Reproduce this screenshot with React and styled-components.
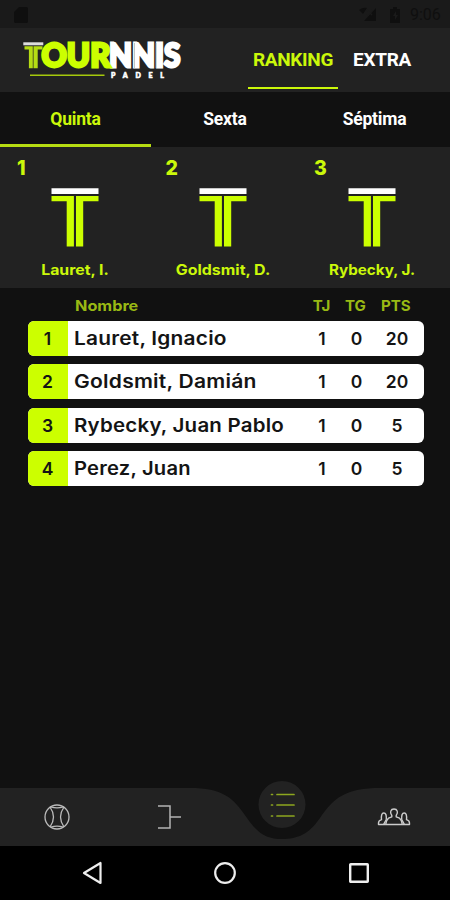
import React, { useState } from 'react';
import styled, { createGlobalStyle } from 'styled-components';

const GlobalStyle = createGlobalStyle`
  * { box-sizing: border-box; }
  body {
    margin: 0;
    background: #111;
    font-family: Inter, "Open Sans", sans-serif;
  }
  svg { display: block; }
`

const Screen = styled.div`
  width: 450px;
  height: 900px;
  display: flex;
  flex-direction: column;
  overflow: hidden;
  background: #111;
`

const StatusBar = styled.div`
  height: 28px;
  flex: none;
  display: flex;
  align-items: center;
  justify-content: space-between;
  padding: 1px 9px 0 14px;
  background: #1a1a1a;
  color: #0f0f0f;
`

const StatusRight = styled.div`
  display: flex;
  align-items: center;
`

const Clock = styled.span`
  width: 31px;
  margin-left: 9px;
  font: 400 16px/20px Roboto, sans-serif;
  white-space: nowrap;
`

const Header = styled.header`
  height: 64px;
  flex: none;
  display: flex;
  justify-content: space-between;
  padding: 0 24px 0 20px;
  background: #222;
`

const Menu = styled.nav`
  display: flex;
  padding-bottom: 3px;
`

const MenuItem = styled.button`
  display: flex;
  align-items: center;
  justify-content: center;
  width: ${p => p.$width}px;
  padding: 3px 0 0;
  border: 0;
  border-bottom: 2.5px solid ${p => p.$active ? '#cbf80a' : 'transparent'};
  background: none;
  color: ${p => p.$active ? '#cbf80a' : '#fff'};
  font: 700 19px Roboto, sans-serif;
  letter-spacing: -0.3px;
`

const Tabs = styled.div`
  height: 55px;
  flex: none;
  display: grid;
  grid-template-columns: 151px 148px 151px;
  background: #111;
`

const Tab = styled.button`
  padding: 2px 0 0;
  border: 0;
  border-bottom: 3px solid ${p => p.$active ? '#b6dc12' : 'transparent'};
  background: none;
  color: ${p => p.$active ? '#cbf80a' : '#fff'};
  font: 700 17.5px Roboto, sans-serif;
  letter-spacing: -0.2px;
`

const Podium = styled.section`
  height: 141px;
  flex: none;
  display: grid;
  grid-template-columns: repeat(3, 148.5px);
  padding: 10px 0 0 0.5px;
  background: #222;
  color: #cbf80a;
`

const Place = styled.div`
  display: flex;
  flex-direction: column;
  align-items: center;
`

const PlaceNumber = styled.div`
  align-self: flex-start;
  padding-left: 16.5px;
  height: 31px;
  font-size: 19.5px;
  font-weight: 800;
  line-height: 23px;
`

const PlaceName = styled.div`
  margin-top: 13px;
  font-size: 14.5px;
  font-weight: 700;
  line-height: 20px;
  transform: scaleX(${p => p.$stretch});
`

const Table = styled.section`
  flex: 1;
  padding: 6px 26px 0 27.5px;
`

const Row = styled.div`
  display: grid;
  grid-template-columns: 40px 1fr 34px 35px 50px;
  align-items: center;
  text-align: center;
`

const TableHead = styled(Row)`
  height: 22px;
  margin-bottom: 4.5px;
  color: #99b914;
  font-size: 14.5px;
  font-weight: 700;
`

const HeadName = styled.span`
  margin-left: 7.5px;
  text-align: left;
  transform: scaleX(1.12);
  transform-origin: left;
`

const HeadLabel = styled.span`
  padding-right: ${p => p.$inset}px;
  transform: scaleX(1.04);
`

const Points = styled.span`
  padding-right: 4px;
`

const PlayerRow = styled(Row)`
  height: 35px;
  margin-bottom: 8.5px;
  border-radius: 6px;
  overflow: hidden;
  background: #fff;
  color: #141414;
  font-size: 17.5px;
  font-weight: 600;
`

const Position = styled.span`
  height: 35px;
  line-height: 36px;
  background: #cf0;
`

// stretched a little, the names are set in a wide face
const PlayerName = styled.span`
  margin-left: 6px;
  padding-bottom: 1px;
  text-align: left;
  font-size: 18.5px;
  letter-spacing: 0.2px;
  white-space: nowrap;
  transform: scaleX(${p => p.$stretch});
  transform-origin: left;
`

const BottomNav = styled.nav`
  position: relative;
  height: 66px;
  flex: none;
  display: grid;
  grid-template-columns: repeat(4, 1fr);
`

const NavShape = styled.svg`
  position: absolute;
  inset: 0;
`

const NavItem = styled.button`
  position: relative;
  display: flex;
  align-items: center;
  justify-content: center;
  padding: ${p => p.$raised ? '0 0 17px 1px' : '8px 0 0 1px'};
  border: 0;
  background: none;
`

const SystemBar = styled.div`
  height: 54px;
  flex: none;
  display: grid;
  grid-template-columns: repeat(3, 1fr);
  align-items: center;
  justify-items: center;
  padding: 0 24px 0 25px;
  background: #000;
`

const Logo = () => (
  <svg width="166" height="64" viewBox="20 28 166 64">
    <g fontFamily="Lato, sans-serif" fontWeight="900" fontSize="32.5">
      <text x="109" y="67" textLength="71.500" lengthAdjust="spacingAndGlyphs" fill="#fff" stroke="#fff" strokeWidth="2.800">NNIS</text>
      <text x="41.500" y="67" textLength="69" lengthAdjust="spacingAndGlyphs" fill="#cf0" stroke="#cf0" strokeWidth="2.800">OUR</text>
    </g>
    <path d="M134.500 43v25M156 43v25" stroke="#999" strokeWidth=".6" />
    <path d="M23.300 42.300h20v3h-20z" fill="#ddd" />
    <path d="M24.500 46.300h8.300v21.900H28.900V49.500h-4.400zM33.500 46.300H42.500v3.200h-4.800v18.700h-4.200z" fill="#b5dc14" />
    <path d="M30 75.300h74.500" stroke="#a5c80c" strokeWidth="1.500" />
    <text x="111" y="77.800" fontFamily="Lato, sans-serif" fontWeight="900" fontSize="7" textLength="53" fill="#fff" stroke="#fff" strokeWidth=".6">PADEL</text>
  </svg>
)

const Avatar = () => (
  <svg width="48" height="59" viewBox="0 0 48 59">
    <path d="M.5 .3h47v5.700H.5z" fill="#fff" />
    <path d="M.5 8H22.900v50.500h-7.200V13.300H.5zM25 8h22.500v5.300H32.200v45.200H25z" fill="#cf0" />
  </svg>
)

const podium = [
  { name: 'Lauret, I.', stretch: 1.09 },
  { name: 'Goldsmit, D.', stretch: 1.1 },
  { name: 'Rybecky, J.', stretch: 1.05 },
]

const players = [
  { name: 'Lauret, Ignacio', tj: 1, tg: 0, pts: 20, stretch: 1.127 },
  { name: 'Goldsmit, Damián', tj: 1, tg: 0, pts: 20, stretch: 1.138 },
  { name: 'Rybecky, Juan Pablo', tj: 1, tg: 0, pts: 5, stretch: 1.107 },
  { name: 'Perez, Juan', tj: 1, tg: 0, pts: 5, stretch: 1.09 },
]

const categories = ['Quinta', 'Sexta', 'Séptima']

const App = () => {
  const [category, setCategory] = useState('Quinta')
  const [page, setPage] = useState('RANKING')

  return <Screen>
    <GlobalStyle />
    <StatusBar>
      <svg width="14" height="16" viewBox="0 0 14 16">
        <path d="M5 0h7.500q1.500 0 1.500 1.500v13q0 1.500-1.500 1.500h-11Q0 16 0 14.500V5z" fill="currentColor" />
      </svg>
      <StatusRight>
        <svg width="42" height="16" viewBox="0 0 42 16">
          <path d="M0 3q4-3 8-2l-4 6zM17 1v13H5z" fill="currentColor" />
          <path d="M8 3l5 5m0-5l-5 5" stroke="#1a1a1a" strokeWidth="1.500" />
          <path d="M34 0h4v2h3v14H31V2h3z" fill="currentColor" />
          <path d="M37 4l-3 5h2v4l3-5h-2z" fill="#1a1a1a" />
        </svg>
        <Clock>9:06</Clock>
      </StatusRight>
    </StatusBar>

    <Header>
      <Logo />
      <Menu>
        <MenuItem $width={90} $active={page === 'RANKING'} onClick={() => setPage('RANKING')}>RANKING</MenuItem>
        <MenuItem $width={88} $active={page === 'EXTRA'} onClick={() => setPage('EXTRA')}>EXTRA</MenuItem>
      </Menu>
    </Header>

    <Tabs>
      {categories.map(c => <Tab key={c} $active={c === category} onClick={() => setCategory(c)}>{c}</Tab>)}
    </Tabs>

    <Podium>
      {podium.map((p, i) => {
        return <Place key={p.name}>
          <PlaceNumber>{i + 1}</PlaceNumber>
          <Avatar />
          <PlaceName $stretch={p.stretch}>{p.name}</PlaceName>
        </Place>
      })}
    </Podium>

    <Table>
      <TableHead>
        <span />
        <HeadName>Nombre</HeadName>
        <HeadLabel $inset={1}>TJ</HeadLabel>
        <HeadLabel $inset={2}>TG</HeadLabel>
        <HeadLabel $inset={6}>PTS</HeadLabel>
      </TableHead>
      {players.map((p, i) => {
        return <PlayerRow key={p.name}>
          <Position>{i + 1}</Position>
          <PlayerName $stretch={p.stretch}>{p.name}</PlayerName>
          <span>{p.tj}</span>
          <span>{p.tg}</span>
          <Points>{p.pts}</Points>
        </PlayerRow>
      })}
    </Table>

    <BottomNav>
      <NavShape width="450" height="66" viewBox="0 780 450 66">
        <path d="M0 788H190C222 788 233 797 247 818C258 834 267 839 282 839C298 839 309 834 320 818C334 797 347 788 380 788H450V846H0Z" fill="#222" />
        <circle cx="282" cy="804.500" r="23.500" fill="#222" />
      </NavShape>
      <NavItem>
        <svg width="26" height="26" viewBox="0 0 26 26" fill="none" stroke="#bbb" strokeWidth="1.300">
          <circle cx="13" cy="13" r="12" />
          <path d="M6 3Q13 13 6 23M20 3Q13 13 20 23M7 2.800Q13 5 19 2.800M7 23.200Q13 21 19 23.200" />
        </svg>
      </NavItem>
      <NavItem>
        <svg width="24" height="26" viewBox="0 0 24 26" fill="none" stroke="#b4b4b4" strokeWidth="1.500">
          <path d="M1 2h12v22H1M13 13h11" />
        </svg>
      </NavItem>
      <NavItem $raised>
        <svg width="26" height="26" viewBox="0 0 26 26" fill="none" stroke="#8da71f" strokeWidth="1.700" strokeLinecap="round">
          <path d="M2.500 2.500h1M8 2.500h17M2.500 13h1M8 13h17M2.500 24h1M8 24h17" />
        </svg>
      </NavItem>
      <NavItem>
        <svg width="34" height="18" viewBox="0 0 34 18" fill="none" stroke="#ccc" strokeWidth="1.400" strokeLinejoin="round">
          <path d="M14.800 7.500Q13 5 13.800 3Q14.500 1 17 1Q19.500 1 20.200 3Q21 5 19.200 7.500V8.800L22.500 10.200Q24.800 12 25.300 16.500H8.700Q9.200 12 11.500 10.200L14.800 8.800z" />
          <path d="M8.500 16.500H1.500V15Q1.500 12.700 4.500 11.700Q3.800 5 6.800 5Q9.800 5 9.300 11.500M25.500 16.500H32.500V15Q32.500 12.700 29.500 11.700Q30.200 5 27.200 5Q24.200 5 24.700 11.500M6.500 16.500l2.800-5M27.500 16.500l-2.800-5" />
        </svg>
      </NavItem>
    </BottomNav>

    <SystemBar>
      <svg width="22" height="24" viewBox="0 0 22 24"><path d="M19.500 2v20L3 12z" fill="none" stroke="#eee" strokeWidth="2.200" strokeLinejoin="round" /></svg>
      <svg width="24" height="24" viewBox="0 0 24 24"><circle cx="12" cy="12" r="9.800" fill="none" stroke="#eee" strokeWidth="2.200" /></svg>
      <svg width="22" height="22" viewBox="0 0 22 22"><rect x="2.200" y="2.200" width="17.600" height="17.600" rx=".5" fill="none" stroke="#eee" strokeWidth="2.400" /></svg>
    </SystemBar>
  </Screen>
}

export default App
